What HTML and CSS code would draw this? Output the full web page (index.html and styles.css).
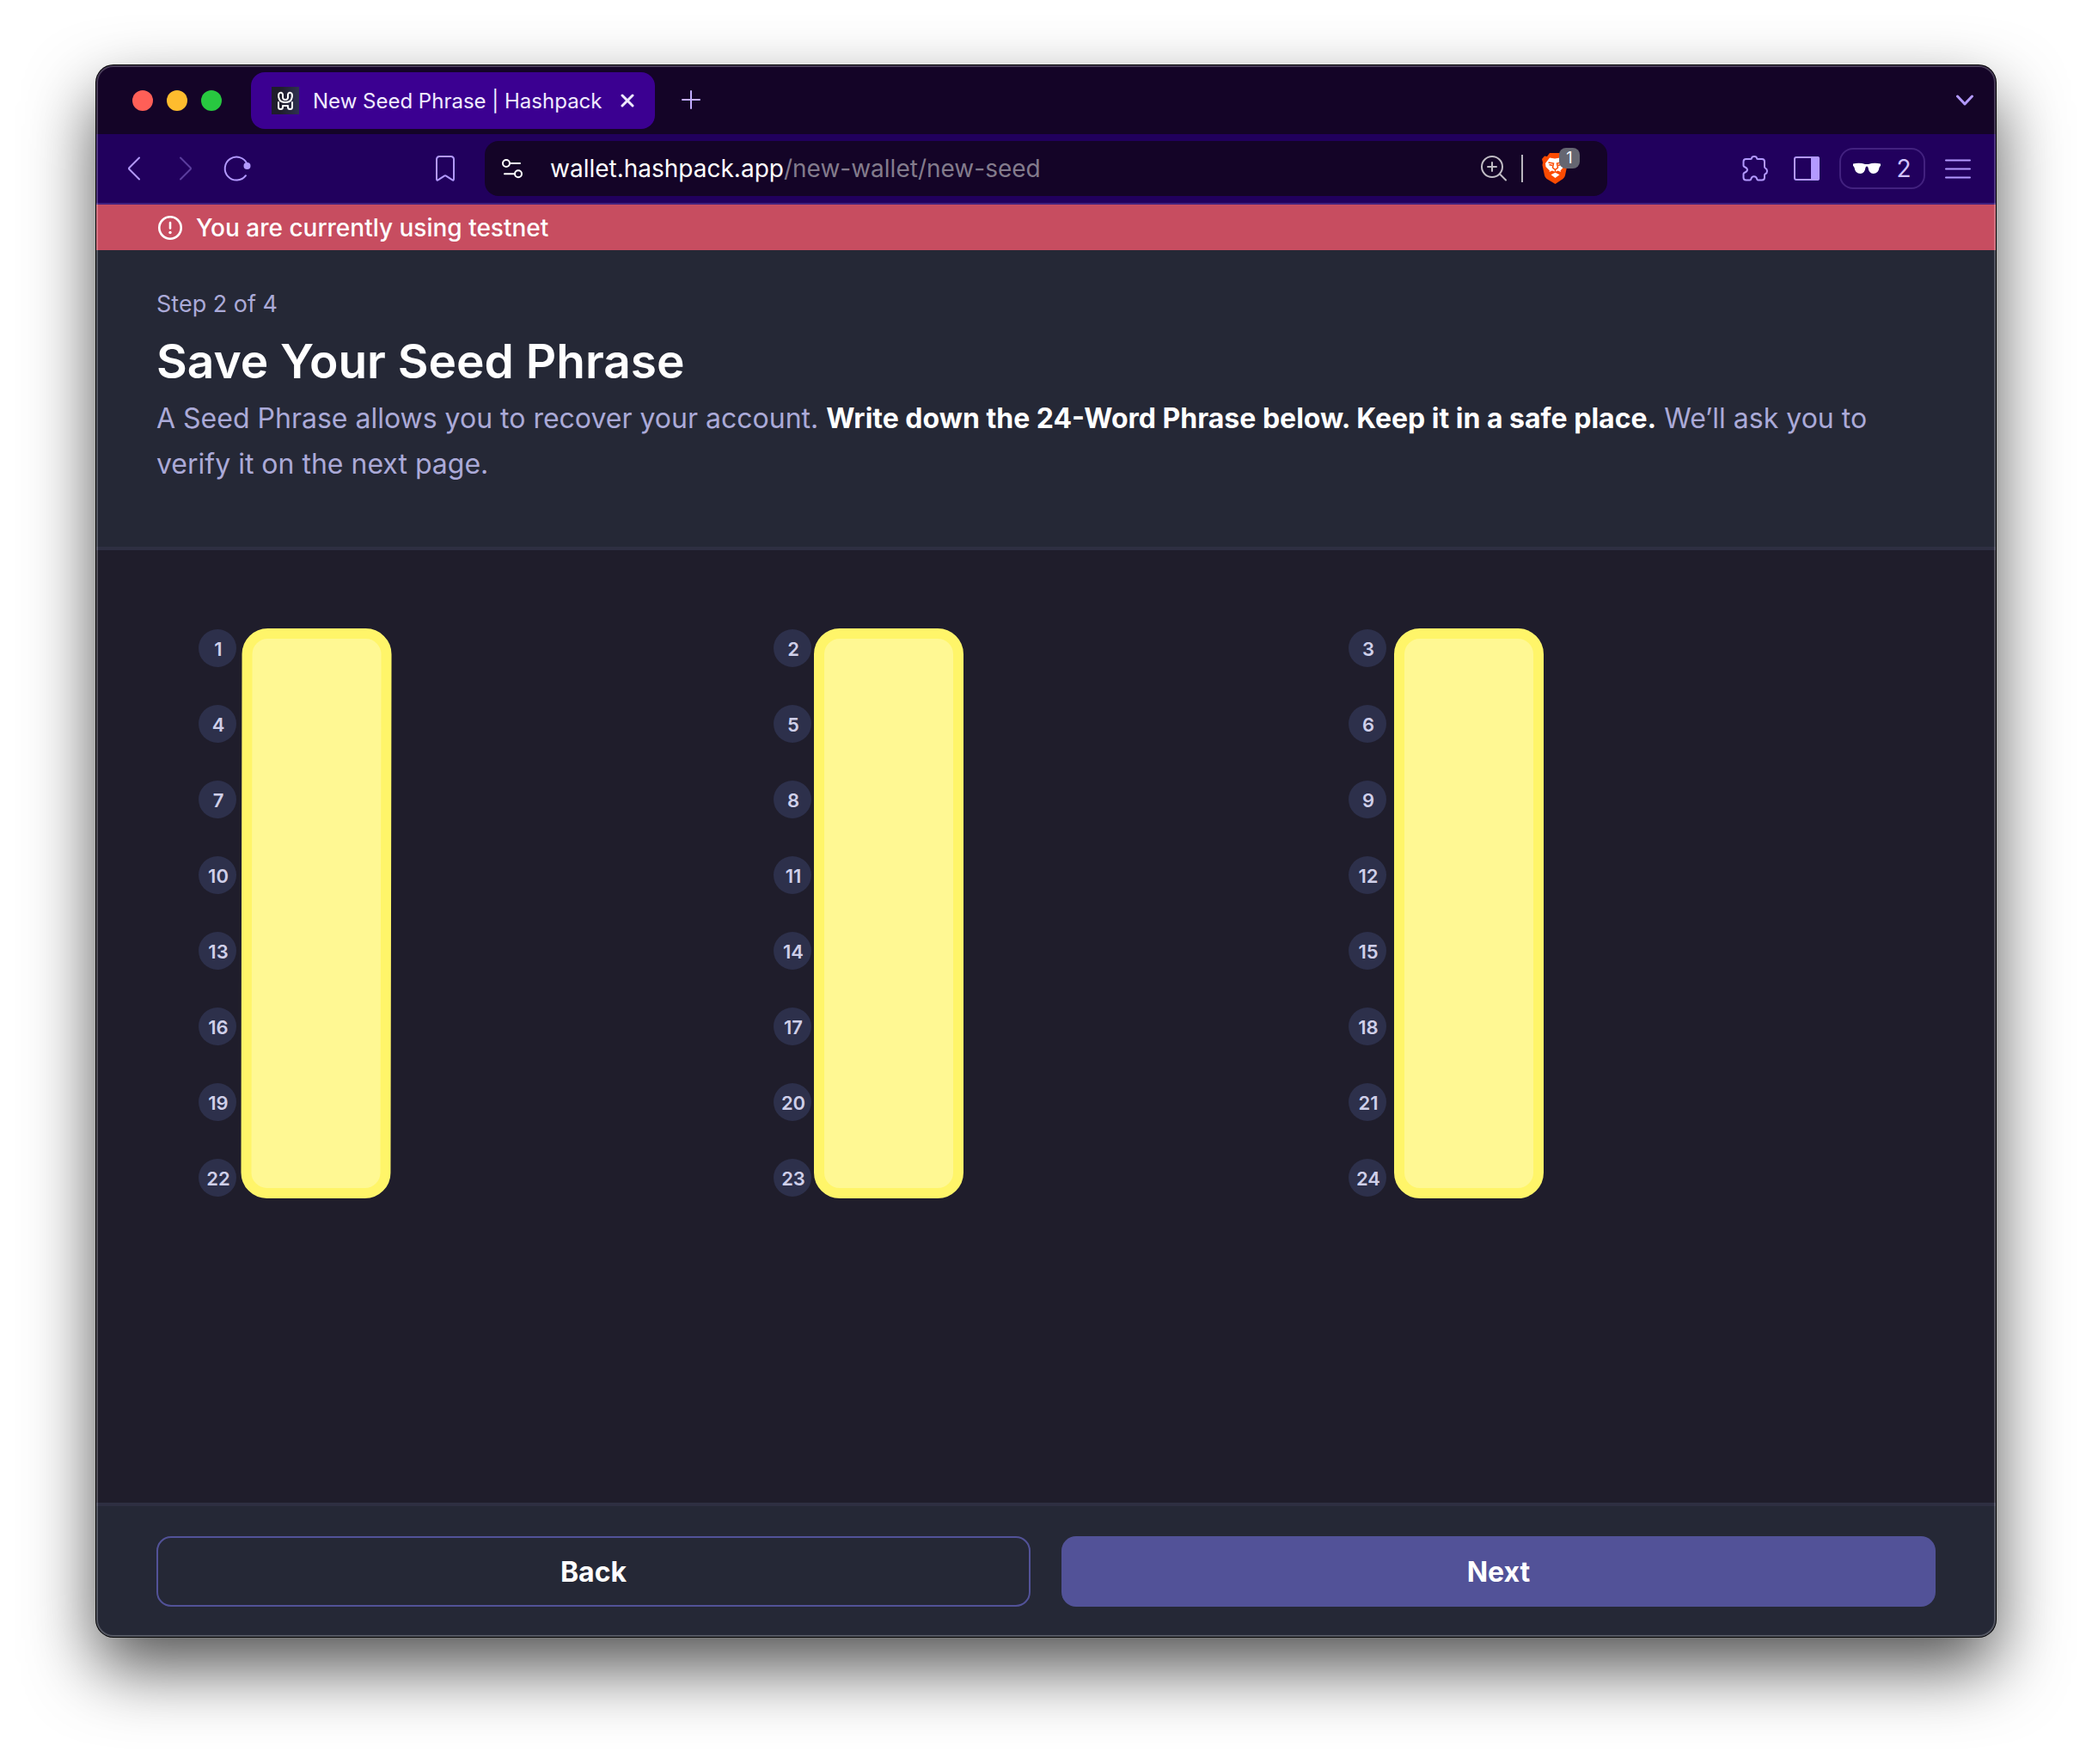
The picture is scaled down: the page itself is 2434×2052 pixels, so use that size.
FILE: index.html
```html
<!DOCTYPE html>
<html lang="en">
<head>
<meta charset="utf-8">
<meta name="viewport" content="width=device-width, initial-scale=1">
<title>New Seed Phrase | Hashpack</title>
<link rel="stylesheet" href="styles.css">
</head>
<body>
<div class="window">
  <div class="tabstrip">
    <div class="lights">
      <button class="light light-close" aria-label="Close window"></button>
      <button class="light light-min" aria-label="Minimize window"></button>
      <button class="light light-max" aria-label="Zoom window"></button>
    </div>
    <div class="tab">
      <svg class="favicon" viewBox="0 0 32 32" fill="none" stroke="#fff" stroke-width="2" stroke-linecap="round" stroke-linejoin="round">
        <defs><linearGradient id="fav"><stop offset=".3" stop-color="#1f1d2b"/><stop offset="1" stop-color="#2f3250"/></linearGradient></defs>
        <path d="M0 0h32v32H0z" fill="url(#fav)" stroke="none"/>
        <path d="M9 14.500C8 12 7.800 9.500 8.500 8C9.800 6 12.600 6.300 13 9V12.500Q13.200 15 16 15Q18.800 15 19 12.500V9C19.400 6.300 22.200 6 23.500 8C24.200 9.500 24 12 23 14.500Q21.500 18 16 18Q10.500 18 9 14.500"/>
        <path d="M8 18V23.500Q8 26 10.500 26Q13 26 13 23.500V22H19V23.500Q19 26 21.500 26Q24 26 24 23.500V18"/>
      </svg>
      <span class="tab-title">New Seed Phrase | Hashpack</span>
      <button class="tab-close" aria-label="Close tab"><svg class="glyph" viewBox="0 0 16 16" fill="none" stroke="#efe9ff" stroke-width="3" stroke-linecap="round"><path d="M2 2l12 12M14 2L2 14"/></svg></button>
    </div>
    <button class="tab-new" aria-label="New tab"><svg class="icon" viewBox="0 0 32 32" fill="none" stroke="#c2acff" stroke-width="2" stroke-linecap="round"><path d="M6 15h20M16 5v20"/></svg></button>
    <button class="tab-list" aria-label="Search tabs"><svg class="icon" viewBox="0 0 32 32" fill="none" stroke="#b399ff" stroke-width="3" stroke-linecap="round" stroke-linejoin="round"><path d="M7.500 11l8.500 9 8.500-9"/></svg></button>
  </div>

  <div class="toolbar">
    <div class="nav">
      <button aria-label="Back"><svg class="icon" viewBox="0 0 32 32"><path d="M22 3.500L10.500 15Q9.500 16 10.500 17L22 28.500"/></svg></button>
      <button class="dim" aria-label="Forward"><svg class="icon" viewBox="0 0 32 32"><path d="M10 3.500L21.500 15Q22.500 16 21.500 17L10 28.500"/></svg></button>
      <button aria-label="Reload"><svg class="icon" viewBox="0 0 32 32"><path d="M26 24.200A13.500 13.500 0 1 1 27.500 10.500"/><circle cx="27.500" cy="13" r="4" fill="#b399ff" stroke="none"/></svg></button>
      <button class="bookmark" aria-label="Bookmark"><svg class="icon" viewBox="0 0 32 32"><path d="M6 5.500Q6 2 9.500 2H22.500Q26 2 26 5.500V28Q26 30.500 24 29.200L17 24.600Q16 24 15 24.600L8 29.200Q6 30.500 6 28Z"/></svg></button>
    </div>
    <div class="address">
      <button aria-label="View site information"><svg class="icon" viewBox="0 0 32 32" stroke="#fff"><circle cx="9" cy="10" r="4"/><path d="M13 10H25M7 22.300H18"/><circle cx="23" cy="22.300" r="4"/></svg></button>
      <button class="url"><span class="host">wallet.hashpack.app</span>/new-wallet/new-seed</button>
      <button aria-label="Page zoom"><svg class="icon" viewBox="0 0 32 32" stroke="#c0bcc4"><circle cx="14" cy="14" r="12"/><path d="M14 9V19M9 14H19M23 22.500L30 29.500"/></svg></button>
      <span class="divider"></span>
      <button class="shields" aria-label="Shields, 1 item blocked">
        <svg class="lion" viewBox="0 0 30 36"><path fill="#fb4b02" d="M9 0H21L24 3.500L27 3L30 8L29 11L29.500 14L27 26Q26.500 28.500 24.500 30L15.500 36L5.500 30Q3.500 28.500 3 26L.5 14L1 11L0 7L3 3.500L6 4Z"/><path fill="#fff" d="M9 5.500L15 6.500L21 5.500L26.500 12L25.500 16L21.500 20.500L22 22L18.500 20.500L15.500 22L12 20.500L8.500 22L9 20.500L4.500 16L4 12Z"/><path fill="#fff" d="M15.500 22.800L20.500 25.200L15.500 29L10.500 25.200Z"/><path fill="none" stroke="#fb4b02" stroke-width="1.500" d="M7.500 11L13.500 12L12.500 17L15.500 19.500L18.500 17L17.500 12L23 11M8.500 13.500L12 14.500M22 13.500L19 14.500M15.500 19.500V22"/></svg>
        <span class="badge">1</span>
      </button>
    </div>
    <div class="actions">
      <button aria-label="Extensions"><svg class="icon" viewBox="0 0 32 32"><path d="M2.500 8Q2.500 5 5.500 5H11Q12 5 12 4.200Q12.200 2 15 2Q17.800 2 18 4.200Q18 5 19 5H24Q27 5 27 8V14Q27 15.200 28 15.600Q30 16.500 30 19Q30 21.500 28 22.300Q27 22.700 27 24V26.500Q27 29.500 24 29.500H19.500Q18.500 29.500 18.300 28.500Q17.500 25.300 14.700 25.300Q12 25.300 11.200 28.500Q11 29.500 10 29.500H5.500Q2.500 29.500 2.500 26.500V22.500Q2.500 21.500 3.500 21Q7 19.500 7 17.500Q7 15.500 3.500 14Q2.500 13.500 2.500 12.500Z"/></svg></button>
      <button class="panel" aria-label="Side panel"><svg class="icon" viewBox="0 0 32 32"><rect x="2" y="3" width="28" height="26" rx="2"/><path d="M22 3H29Q30 3 30 5V27Q30 29 29 29H22Z" fill="#b399ff"/></svg></button>
      <button class="profile" aria-label="Private windows: 2"><svg class="icon" viewBox="0 0 32 32"><path fill="#fff" stroke="none" d="M0 10.500Q8 9 14 11H18Q24 9 32 10.500V13Q31 13.500 30.500 15Q29.500 22 23.500 22Q18.500 22 17.500 15Q17.300 13.500 16 13.500Q14.700 13.500 14.500 15Q13.500 22 8.500 22Q2.500 22 1.500 15Q1 13.500 0 13Z"/></svg><span>2</span></button>
      <button aria-label="Menu"><svg class="icon" viewBox="0 0 32 32"><path d="M2 6.500H30M2 16.500H30M2 26.500H30"/></svg></button>
    </div>
  </div>

  <div class="notice" role="status">
    <svg class="icon" viewBox="0 0 32 32" fill="none" stroke="#fff" stroke-width="2.600" stroke-linecap="round"><circle cx="16" cy="16" r="12.700"/><path d="M16 10V16.500"/><circle cx="16" cy="21.500" r="1.700" fill="#fff" stroke="none"/></svg>
    <span>You are currently using testnet</span>
  </div>

  <header class="intro">
    <p class="step">Step 2 of 4</p>
    <h1>Save Your Seed Phrase</h1>
    <p class="lead">A Seed Phrase allows you to recover your account. <strong>Write down the 24-Word Phrase below. Keep it in a safe place.</strong> We’ll ask you to verify it on the next page.</p>
  </header>

  <main class="words">
    <div class="column">
      <ul><li>1</li><li>4</li><li>7</li><li>10</li><li>13</li><li>16</li><li>19</li><li>22</li></ul>
      <div class="cover cover-first"></div>
    </div>
    <div class="column">
      <ul><li>2</li><li>5</li><li>8</li><li>11</li><li>14</li><li>17</li><li>20</li><li>23</li></ul>
      <div class="cover cover-second"></div>
    </div>
    <div class="column">
      <ul><li>3</li><li>6</li><li>9</li><li>12</li><li>15</li><li>18</li><li>21</li><li>24</li></ul>
      <div class="cover cover-third"></div>
    </div>
  </main>

  <footer class="controls">
    <button class="btn btn-outline">Back</button>
    <button class="btn btn-solid">Next</button>
  </footer>
</div>
</body>
</html>
```
FILE: styles.css
```css
* { box-sizing: border-box; }

body {
  margin: 0;
  min-height: 100vh;
  padding: 76px 112px 148px;
  display: flex;
  flex-direction: column;
  background: #fff;
  font-family: Inter, "Open Sans", sans-serif;
  color: #fff;
}

button {
  display: flex;
  align-items: center;
  justify-content: center;
  margin: 0;
  padding: 0;
  border: 0;
  background: none;
  color: inherit;
  font: inherit;
  cursor: pointer;
}

.icon { display: block; width: 32px; height: 32px; flex: none; }

/* Window frame */
.window {
  position: relative;
  flex: 1;
  display: flex;
  flex-direction: column;
  border-radius: 20px;
  overflow: hidden;
  background: #1f1d2b;
  box-shadow: 0 0 0 1px #000, 0 36px 80px rgba(0, 0, 0, .68);
}

.window::after {
  content: "";
  position: absolute;
  inset: 0;
  border: 2px solid rgba(255, 255, 255, .22);
  border-radius: 20px;
  pointer-events: none;
}

/* Tab strip */
.tabstrip {
  display: flex;
  align-items: center;
  height: 80px;
  padding: 2px 20px 0 42px;
  background: #140427;
}

.lights { display: flex; gap: 16px; margin-right: 34px; }
.light { width: 24px; height: 24px; border-radius: 50%; }
.light-close { background: #ff5f57; }
.light-min { background: #febc2e; }
.light-max { background: #28c840; }

.tab {
  display: flex;
  align-items: center;
  width: 470px;
  height: 66px;
  padding: 0 24px;
  border-radius: 16px;
  background: #3b0091;
}

.favicon { width: 32px; height: 32px; margin-right: 16px; }
.tab-title { flex: 1; font-size: 24px; white-space: nowrap; color: #f1ebff; }
.glyph { display: block; width: 16px; height: 16px; }
.tab-new { margin-left: 26px; }
.tab-list { margin-left: auto; }

/* Toolbar */
.toolbar {
  display: flex;
  align-items: center;
  height: 82px;
  padding: 0 28px;
  border-bottom: 2px solid #42217f;
  background: #21005d;
}

.toolbar .icon {
  fill: none;
  stroke-width: 2;
  stroke-linecap: round;
  stroke-linejoin: round;
}

.nav, .actions { display: flex; align-items: center; stroke: #b399ff; }
.nav { flex: 0 0 394px; gap: 28px; margin-right: 30px; }
.dim { opacity: .4; }
.bookmark { margin-left: auto; }

.address {
  flex: 1;
  display: flex;
  align-items: center;
  height: 64px;
  padding: 0 32px 0 16px;
  border-radius: 16px;
  background: #140427;
}

.url {
  flex: 1;
  justify-content: flex-start;
  margin-left: 28px;
  font-size: 28px;
  color: #837b8c;
}

.host { color: #fff; }
.divider { width: 2px; height: 32px; margin: 0 22px 0 16px; background: #b9b5be; }
.shields { position: relative; width: 44px; justify-content: flex-start; }
.lion { display: block; width: 30px; height: 36px; }

.badge {
  position: absolute;
  top: -6px;
  left: 20px;
  width: 24px;
  height: 24px;
  border-radius: 8px;
  background: #656671;
  font-size: 18px;
  line-height: 24px;
}

.actions { flex: 0 0 424px; justify-content: flex-end; gap: 22px; }
.panel { margin-left: 6px; }

.profile {
  width: 100px;
  height: 48px;
  gap: 18px;
  border: 2px solid #42217f;
  border-radius: 16px;
  font-size: 28px;
  color: #d3c4ff;
}

/* Page */
.notice {
  display: flex;
  align-items: center;
  gap: 14px;
  height: 53px;
  padding: 0 70px;
  background: #c74d60;
  font-size: 28px;
  font-weight: 500;
}

.intro {
  padding: 43px 70px 70px;
  border-bottom: 4px solid #2e2f42;
  background: #252836;
  color: #abaad8;
}

.step { margin: 0 0 14px; font-size: 27px; line-height: 40px; }
h1 { margin: 0 0 8px; font-size: 55px; font-weight: 600; line-height: 64px; color: #fff; }
.lead { margin: 0; font-size: 32px; line-height: 53px; }
.lead strong { font-weight: 700; color: #fff; }

.words {
  flex: 1;
  display: grid;
  grid-template-columns: repeat(3, 1fr);
  align-items: start;
  padding: 92px 84px 92px 119px;
}

.column { position: relative; }

.column ul {
  display: flex;
  flex-direction: column;
  gap: 44px;
  margin: 0;
  padding: 0;
  list-style: none;
}

.column li {
  width: 44px;
  height: 44px;
  padding-left: 2px;
  border-radius: 50%;
  background: #2d304b;
  font-size: 22px;
  font-weight: 600;
  line-height: 46px;
  text-align: center;
  color: #cfcfe9;
}

/* Highlighter blocks laid over the secret words */
.cover {
  position: absolute;
  top: -1px;
  bottom: -2px;
  width: 174px;
  border: 12px solid #fff569;
  border-radius: 30px;
  background: #fff893;
}

.cover-first { left: 50px; transform: rotate(.1deg); }
.cover-second { left: 47px; }
.cover-third { left: 53px; }

.controls {
  display: grid;
  grid-template-columns: 1fr 1fr;
  gap: 36px;
  padding: 35px 70px;
  border-top: 4px solid #2e2f42;
  background: #252836;
}

.btn {
  height: 82px;
  border-radius: 17px;
  font-size: 32px;
  font-weight: 700;
  color: #fff;
}

.btn-outline { border: 2px solid #525298; }
.btn-solid { background: #525298; }
```
